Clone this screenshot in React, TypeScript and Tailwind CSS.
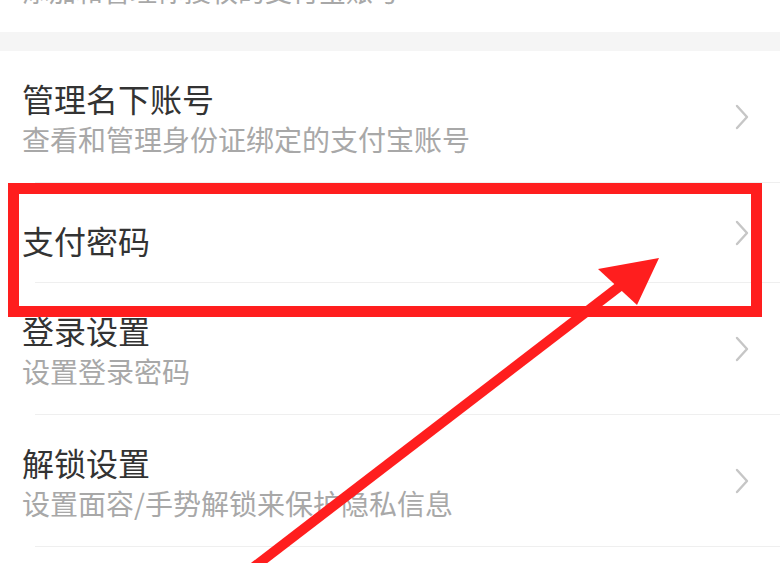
import React from 'react';

interface RowProps {
  title: string;
  subtitle?: string;
}

const Chevron = () => (
  <svg width="16" height="26" viewBox="0 0 16 26" className="shrink-0">
    <polyline points="3,2 13,13 3,24" fill="none" stroke="#c6c6c6" strokeWidth="2.4" strokeLinecap="round" strokeLinejoin="round" />
  </svg>
);

const SettingRow: React.FC<RowProps> = ({ title, subtitle }) => (
  <div className="flex flex-col">
    <div className={`flex items-center pl-[22px] pr-[30px] ${subtitle ? 'h-[131px]' : 'h-[99px]'}`}>
      <div className={`flex-1 self-start ${subtitle ? 'pt-[27px]' : 'pt-[37px]'}`}>
        <div className="text-[32px] leading-[40px] text-[#333333]">{title}</div>
        {subtitle && <div className="mt-[3px] text-[28px] leading-[36px] text-[#a8a8a8]">{subtitle}</div>}
      </div>
      <Chevron />
    </div>
    <div className="ml-[35px] h-px bg-[#efefef]" />
  </div>
);

export default function App() {
  return (
    <div
      className="relative w-[780px] h-[563px] overflow-hidden bg-white"
      style={{ fontFamily: '"Noto Sans CJK SC", "Noto Sans", sans-serif' }}
    >
      {/* cut-off row above */}
      <div className="h-[32px] overflow-hidden pl-[22px]">
        <div className="-mt-[27px] text-[27px] leading-[36px] text-[#a8a8a8]">添加和管理你授权的支付宝账号</div>
      </div>
      <div className="h-[19px] bg-[#f5f5f5]" />

      <SettingRow title="管理名下账号" subtitle="查看和管理身份证绑定的支付宝账号" />
      <SettingRow title="支付密码" />
      <SettingRow title="登录设置" subtitle="设置登录密码" />
      <SettingRow title="解锁设置" subtitle="设置面容/手势解锁来保护隐私信息" />

      {/* annotation: highlight box + arrow */}
      <div className="pointer-events-none absolute left-[8px] top-[183px] w-[754px] h-[134px] border-[11px] border-[#ff1e1e]" />
      <svg className="pointer-events-none absolute inset-0" width="780" height="563" viewBox="0 0 780 563">
        <line x1="250" y1="570" x2="620" y2="286" stroke="#ff1e1e" strokeWidth="10" />
        <polygon points="598,269 659,258 637,305" fill="#ff1e1e" />
      </svg>
    </div>
  );
}
